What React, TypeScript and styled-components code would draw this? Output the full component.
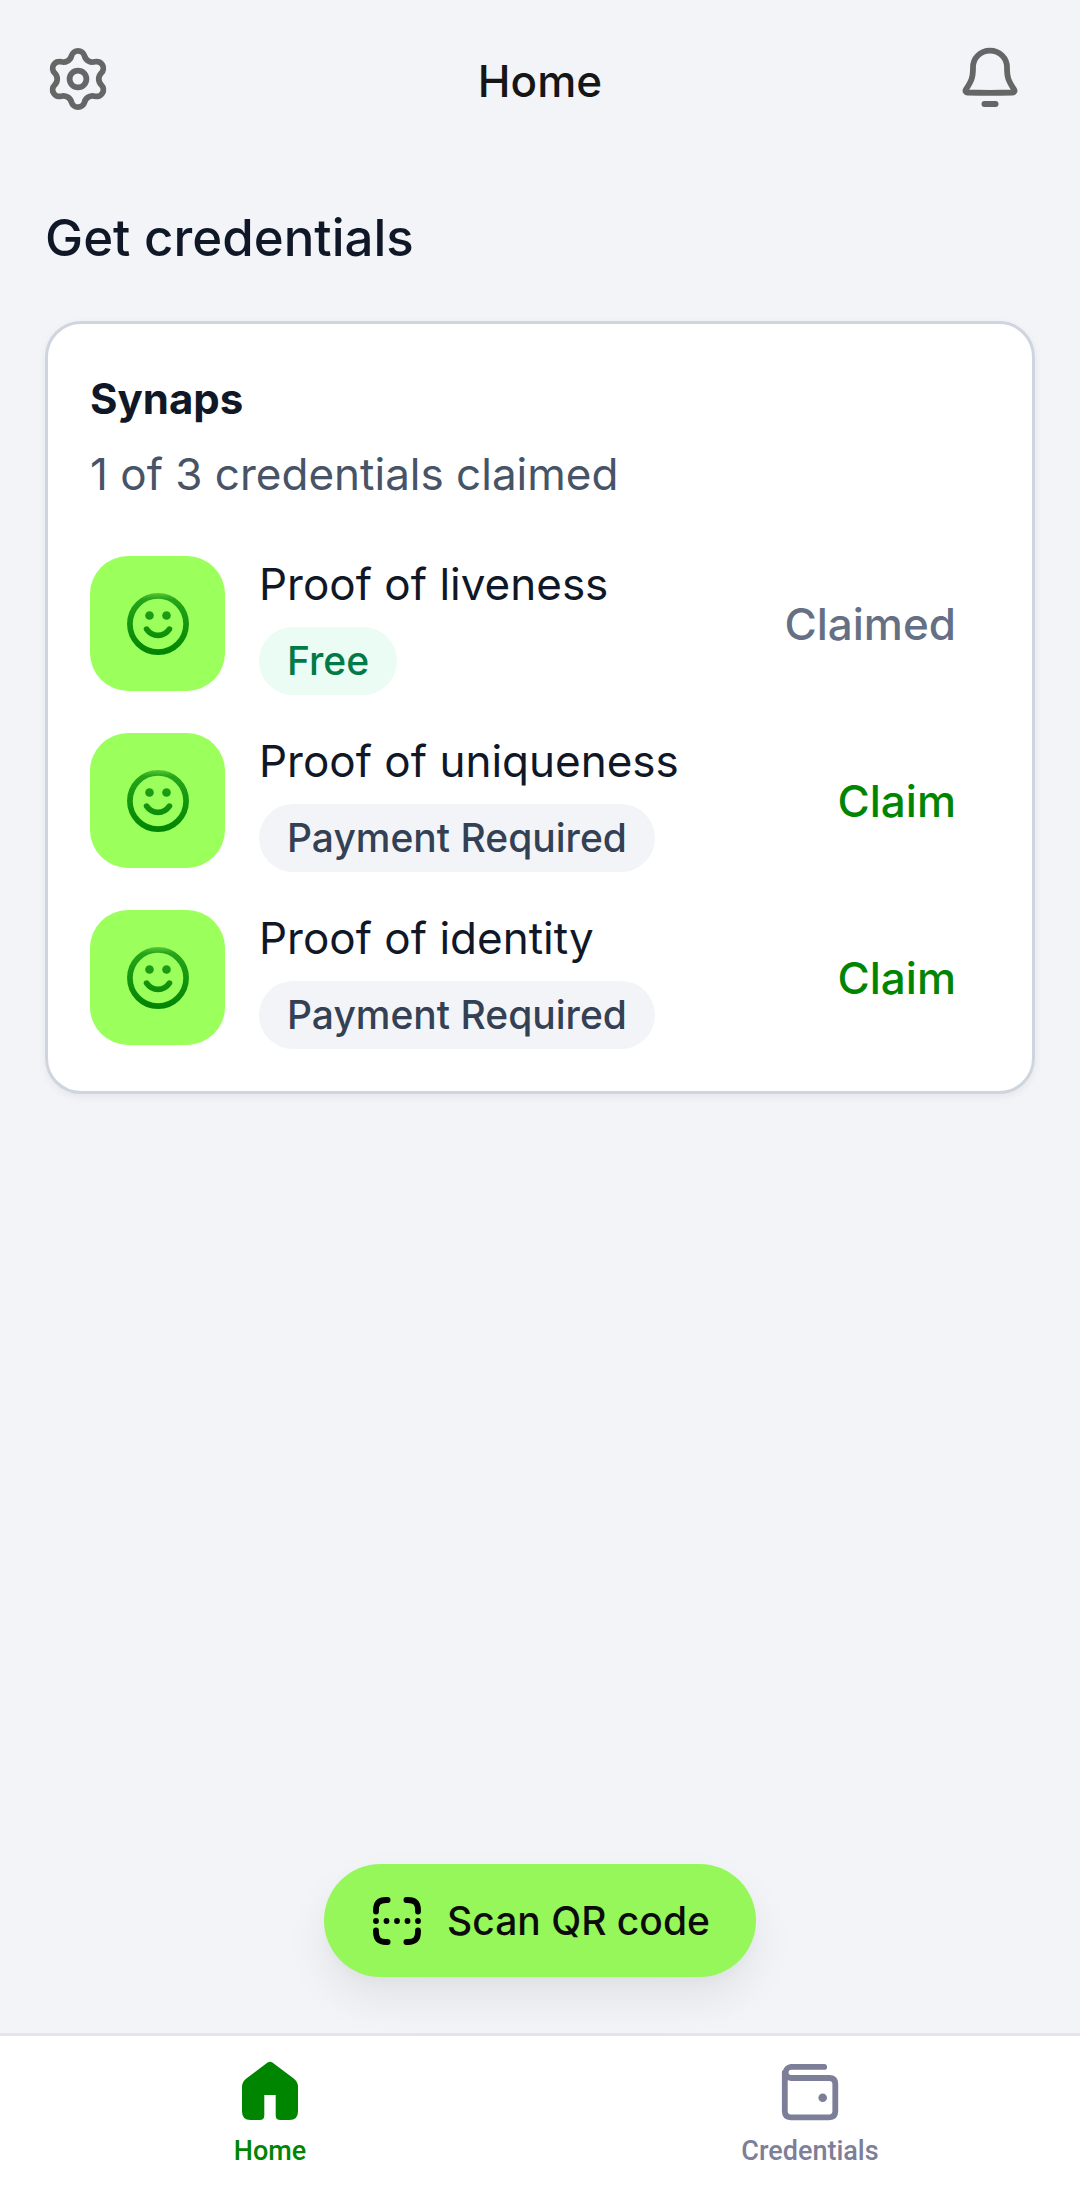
import React from "react";
import styled, { createGlobalStyle } from "styled-components";

const GlobalStyle = createGlobalStyle`
  *, *::before, *::after { box-sizing: border-box; }
  body {
    margin: 0;
    background: #f2f4f8;
    font-family: Inter, "Liberation Sans", sans-serif;
    color: #101828;
  }
  h1, h2, h3, p, ul { margin: 0; padding: 0; }
  ul { list-style: none; }
  button { border: 0; background: none; padding: 0; font: inherit; color: inherit; cursor: pointer; }
  svg { display: block; flex: none; }
`;

const Page = styled.div`
  min-height: 100vh;
  display: flex;
  flex-direction: column;
`;

const Header = styled.header`
  height: 158px;
  padding: 0 56px 0 44px;
  display: grid;
  grid-template-columns: 80px 1fr 68px;
  align-items: center;
`;

const IconButton = styled.button`
  justify-self: start;
  color: #666666;
`;

const ScreenTitle = styled.h1`
  padding-top: 3px;
  font-size: 44px;
  line-height: 64px;
  font-weight: 500;
  text-align: center;
  color: #161616;
`;

const Main = styled.main`
  flex: 1;
  display: flex;
  flex-direction: column;
  padding: 48px 45px 56px;
`;

const SectionTitle = styled.h2`
  font-size: 51px;
  line-height: 64px;
  font-weight: 500;
`;

const Card = styled.section`
  margin-top: 51px;
  padding: 42px;
  border: 3px solid #cfd5df;
  border-radius: 36px;
  background: #ffffff;
  box-shadow: 0 3px 8px rgba(16, 24, 40, 0.06);
`;

const Issuer = styled.h3`
  font-size: 42px;
  line-height: 66px;
  font-weight: 700;
`;

const Progress = styled.p`
  margin-top: 10px;
  font-size: 44px;
  line-height: 64px;
  color: #475467;
`;

const CredentialList = styled.ul`
  margin-top: 50px;
  display: flex;
  flex-direction: column;
  gap: 38px;
`;

const CredentialRow = styled.li`
  display: flex;
  align-items: flex-start;
  gap: 34px;
`;

const Tile = styled.div`
  width: 135px;
  height: 135px;
  flex: none;
  display: grid;
  place-items: center;
  border-radius: 38px;
  background: #9bff5c;
`;

const Details = styled.div`
  flex: 1;
  display: flex;
  flex-direction: column;
  align-items: flex-start;
  gap: 15px;
`;

const CredentialName = styled.p`
  font-size: 44px;
  line-height: 56px;
`;

const Badge = styled.span<{ $free?: boolean }>`
  padding: 0 28px;
  border-radius: 34px;
  font-size: 39px;
  line-height: 68px;
  font-weight: 500;
  color: ${(p) => (p.$free ? "#027a48" : "#344054")};
  background: ${(p) => (p.$free ? "#eafcf3" : "#f2f4f8")};
`;

const ClaimButton = styled.button`
  height: 135px;
  padding-right: 34px;
  font-size: 44px;
  font-weight: 500;
  color: #008500;
  &:disabled { color: #667085; cursor: default; }
`;

const ScanButton = styled.button`
  margin: auto auto 0;
  height: 113px;
  padding: 0 46px 0 49px;
  display: flex;
  align-items: center;
  gap: 26px;
  border-radius: 57px;
  background: #95f75a;
  color: #0c0c0c;
  font-size: 39px;
  font-weight: 500;
  box-shadow: 0 22px 44px rgba(0, 0, 0, 0.07), 0 6px 12px rgba(0, 0, 0, 0.02);
`;

const TabBar = styled.nav`
  height: 166px;
  display: grid;
  grid-template-columns: 1fr 1fr;
  border-top: 3px solid #e4e4ee;
  background: #ffffff;
`;

const Tab = styled.a<{ $active?: boolean }>`
  padding-top: 21px;
  display: flex;
  flex-direction: column;
  align-items: center;
  gap: 10px;
  font-family: Roboto, "Liberation Sans", sans-serif;
  font-size: 27px;
  line-height: 32px;
  font-weight: 500;
  text-decoration: none;
  color: ${(p) => (p.$active ? "#008500" : "#7d7e97")};
`;

const stroke = {
  fill: "none",
  stroke: "currentColor",
  strokeWidth: 5.8,
  strokeLinecap: "round" as const,
  strokeLinejoin: "round" as const,
};

const GearIcon = () => (
  <svg width="68" height="68" viewBox="-34 -34 68 68" {...stroke} aria-hidden="true">
    <path d="M23.34 5.99A6.7 6.7 0 0 1 16.86 17.22A8.33 8.33 0 0 0 6.48 23.21A6.7 6.7 0 0 1 -6.48 23.21A8.33 8.33 0 0 0 -16.86 17.22A6.7 6.7 0 0 1 -23.34 5.99A8.33 8.33 0 0 0 -23.34 -5.99A6.7 6.7 0 0 1 -16.86 -17.22A8.33 8.33 0 0 0 -6.48 -23.21A6.7 6.7 0 0 1 6.48 -23.21A8.33 8.33 0 0 0 16.86 -17.22A6.7 6.7 0 0 1 23.34 -5.99A8.33 8.33 0 0 0 23.34 5.99Z" />
    <circle r="8.4" />
  </svg>
);

const BellIcon = () => (
  <svg width="68" height="68" viewBox="0 0 68 68" {...stroke} aria-hidden="true">
    <path d="M34 5.6C24.4 5.6 17 13 17 22.4C17 33 15.3 36.4 9.8 44.6C9 46 9.8 47.3 11.4 47.5Q34 48.3 56.6 47.5C58.2 47.3 59 46 58.2 44.6C52.7 36.4 51 33 51 22.4C51 13 43.6 5.6 34 5.6Z" />
    <path d="M28.4 59H39.6" />
  </svg>
);

const SmileIcon = ({ id }: { id: string }) => (
  <svg width="68" height="68" viewBox="-34 -34 68 68" fill="none" aria-hidden="true">
    <defs>
      <linearGradient id={id} gradientUnits="userSpaceOnUse" x1="0" y1="-31" x2="0" y2="31">
        <stop offset="0" stopColor="#5ac737" />
        <stop offset="0.1" stopColor="#26a51a" />
        <stop offset="0.5" stopColor="#15960f" />
        <stop offset="1" stopColor="#008400" />
      </linearGradient>
    </defs>
    <g stroke={`url(#${id})`} strokeWidth="5.7" strokeLinecap="round">
      <circle r="28.1" />
      <path d="M-11.4 5.2C-5.6 13.5 5.6 13.5 11.4 5.2" />
    </g>
    <g fill={`url(#${id})`}>
      <circle cx="-8.5" cy="-8.5" r="4.3" />
      <circle cx="8.5" cy="-8.5" r="4.3" />
    </g>
  </svg>
);

const ScanIcon = () => (
  <svg width="48" height="48" viewBox="0 0 48 48" {...stroke} stroke="#000" aria-hidden="true">
    <path d="M3 14.6V13C3 6 6 3 13 3H14.6M33.4 3H35C42 3 45 6 45 13V14.6M45 33.4V35C45 42 42 45 35 45H33.4M14.6 45H13C6 45 3 42 3 35V33.4" />
    <path d="M3 24h.01M13.5 24h.01M24 24h.01M34.5 24h.01M45 24h.01" />
  </svg>
);

const HomeIcon = () => (
  <svg width="68" height="68" viewBox="0 0 68 68" fill="currentColor" aria-hidden="true">
    <path d="M31.6 5.6Q34 4 36.4 5.6L58 21.8Q62 25 62 30V54.5Q62 63 53.5 63H44.5Q39.7 63 39.7 58.5V38H28.3V58.5Q28.3 63 23.5 63H14.5Q6 63 6 54.5V30Q6 25 10 21.8Z" />
  </svg>
);

const WalletIcon = () => (
  <svg width="68" height="68" viewBox="0 0 68 68" {...stroke} aria-hidden="true">
    <path d="M48.2 9.9H15A6.2 5.6 0 0 0 15 21H53.2Q59.3 21 59.3 27V54.3Q59.3 60.3 53.2 60.3H14.8Q8.8 60.3 8.8 54.3V15.5" />
    <circle cx="46.7" cy="40.7" r="4.3" fill="currentColor" stroke="none" />
  </svg>
);

const credentials = [
  { id: "liveness", name: "Proof of liveness", free: true, claimed: true },
  { id: "uniqueness", name: "Proof of uniqueness", free: false, claimed: false },
  { id: "identity", name: "Proof of identity", free: false, claimed: false },
];

export default function App() {
  return (
    <>
      <GlobalStyle />
      <Page>
        <Header>
          <IconButton type="button" aria-label="Settings">
            <GearIcon />
          </IconButton>
          <ScreenTitle>Home</ScreenTitle>
          <IconButton type="button" aria-label="Notifications">
            <BellIcon />
          </IconButton>
        </Header>
        <Main>
          <SectionTitle>Get credentials</SectionTitle>
          <Card>
            <Issuer>Synaps</Issuer>
            <Progress>1 of 3 credentials claimed</Progress>
            <CredentialList>
              {credentials.map((c) => (
                <CredentialRow key={c.id}>
                  <Tile>
                    <SmileIcon id={`smile-${c.id}`} />
                  </Tile>
                  <Details>
                    <CredentialName>{c.name}</CredentialName>
                    <Badge $free={c.free}>{c.free ? "Free" : "Payment Required"}</Badge>
                  </Details>
                  <ClaimButton type="button" disabled={c.claimed}>
                    {c.claimed ? "Claimed" : "Claim"}
                  </ClaimButton>
                </CredentialRow>
              ))}
            </CredentialList>
          </Card>
          <ScanButton type="button">
            <ScanIcon />
            Scan QR code
          </ScanButton>
        </Main>
        <TabBar>
          <Tab href="#home" $active aria-current="page">
            <HomeIcon />
            Home
          </Tab>
          <Tab href="#credentials">
            <WalletIcon />
            Credentials
          </Tab>
        </TabBar>
      </Page>
    </>
  );
}
